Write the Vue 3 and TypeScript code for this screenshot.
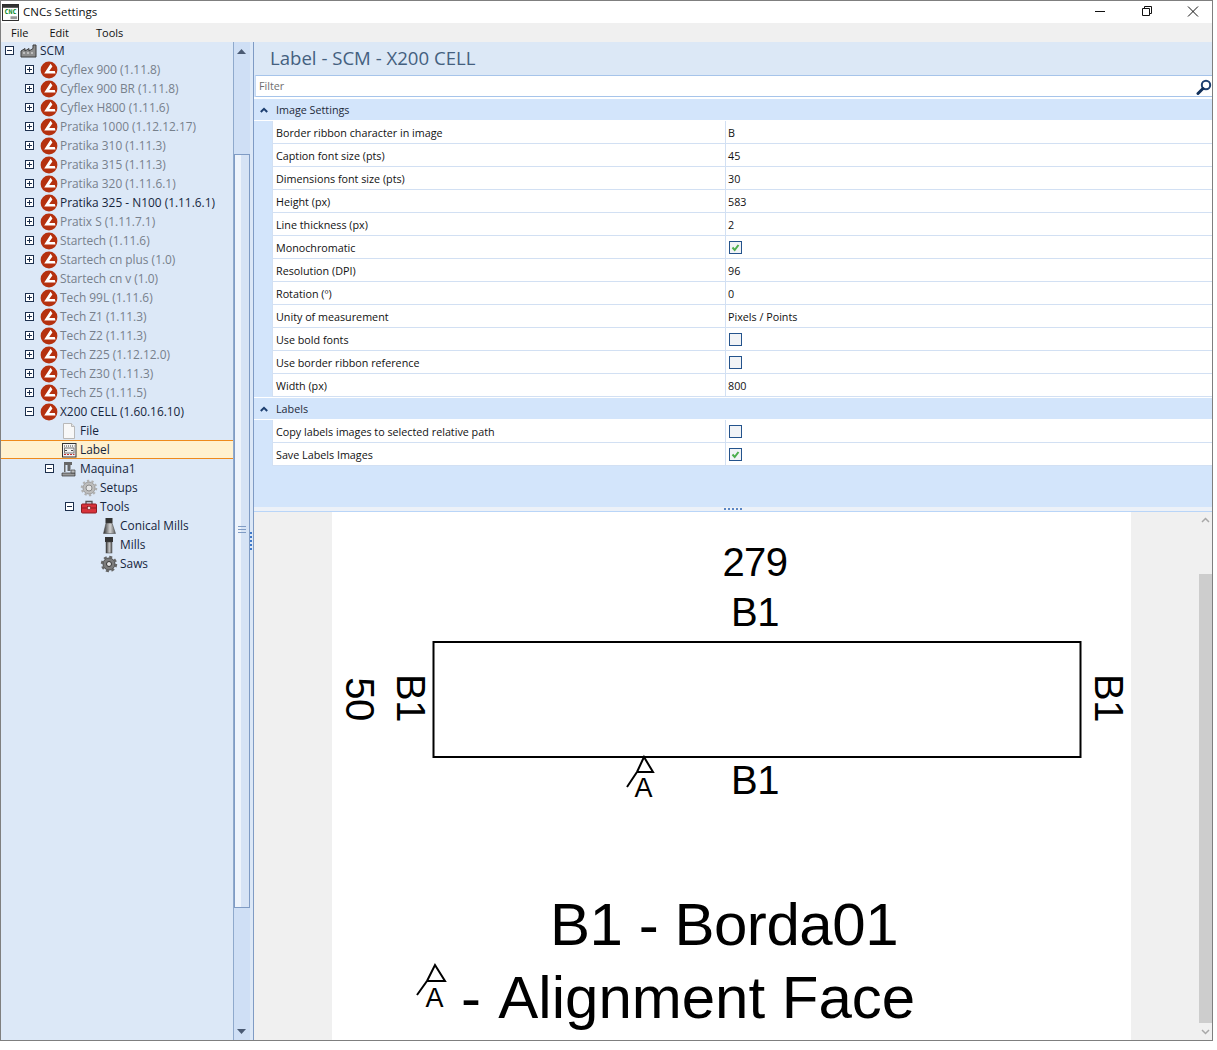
<script setup lang="ts">
interface TreeNode {
  label: string;
  level: number;
  icon: string;
  expander?: "plus" | "minus";
  muted?: boolean;
  selected?: boolean;
}

const model = (label: string, muted = true, expander: "plus" | "minus" | undefined = "plus"): TreeNode => ({
  label,
  level: 1,
  icon: "logo",
  expander,
  muted,
});

const nodes: TreeNode[] = [
  { label: "SCM", level: 0, icon: "factory", expander: "minus" },
  model("Cyflex 900 (1.11.8)"),
  model("Cyflex 900 BR (1.11.8)"),
  model("Cyflex H800 (1.11.6)"),
  model("Pratika 1000 (1.12.12.17)"),
  model("Pratika 310 (1.11.3)"),
  model("Pratika 315 (1.11.3)"),
  model("Pratika 320 (1.11.6.1)"),
  model("Pratika 325 - N100 (1.11.6.1)", false),
  model("Pratix S (1.11.7.1)"),
  model("Startech (1.11.6)"),
  model("Startech cn plus (1.0)"),
  { label: "Startech cn v (1.0)", level: 1, icon: "logo", muted: true },
  model("Tech 99L (1.11.6)"),
  model("Tech Z1 (1.11.3)"),
  model("Tech Z2 (1.11.3)"),
  model("Tech Z25 (1.12.12.0)"),
  model("Tech Z30 (1.11.3)"),
  model("Tech Z5 (1.11.5)"),
  model("X200 CELL (1.60.16.10)", false, "minus"),
  { label: "File", level: 2, icon: "file" },
  { label: "Label", level: 2, icon: "label", selected: true },
  { label: "Maquina1", level: 2, icon: "machine", expander: "minus" },
  { label: "Setups", level: 3, icon: "gear" },
  { label: "Tools", level: 3, icon: "toolbox", expander: "minus" },
  { label: "Conical Mills", level: 4, icon: "conical" },
  { label: "Mills", level: 4, icon: "mill" },
  { label: "Saws", level: 4, icon: "saw" },
];

interface Setting {
  name: string;
  value?: string;
  checked?: boolean;
}

const groups: { title: string; rows: Setting[] }[] = [
  {
    title: "Image Settings",
    rows: [
      { name: "Border ribbon character in image", value: "B" },
      { name: "Caption font size (pts)", value: "45" },
      { name: "Dimensions font size (pts)", value: "30" },
      { name: "Height (px)", value: "583" },
      { name: "Line thickness (px)", value: "2" },
      { name: "Monochromatic", checked: true },
      { name: "Resolution (DPI)", value: "96" },
      { name: "Rotation (º)", value: "0" },
      { name: "Unity of measurement", value: "Pixels / Points" },
      { name: "Use bold fonts", checked: false },
      { name: "Use border ribbon reference", checked: false },
      { name: "Width (px)", value: "800" },
    ],
  },
  {
    title: "Labels",
    rows: [
      { name: "Copy labels images to selected relative path", checked: false },
      { name: "Save Labels Images", checked: true },
    ],
  },
];
</script>

<template>
  <div class="window">
    <header class="titlebar">
      <svg class="app-icon" width="17" height="17" viewBox="0 0 18 18">
        <rect x="0.5" y="0.5" width="17" height="17" fill="#fff" stroke="#222" />
        <rect x="1" y="1" width="16" height="3" fill="#333" />
        <text x="9" y="11" class="app-icon-text">CNC</text>
        <rect x="9" y="13" width="7" height="3" fill="#999" />
      </svg>
      <span class="title">CNCs Settings</span>
      <div class="window-buttons">
        <svg width="46" height="22" viewBox="-4 0 46 22"><path d="M17 10.500h10" stroke="#111" fill="none" /></svg>
        <svg width="46" height="22" viewBox="-4 0 46 22">
          <path d="M18.500 7.500h7v7h-7zM20.500 7.500v-2h7v7h-2" stroke="#111" fill="none" />
        </svg>
        <svg width="46" height="22" viewBox="-4 0 46 22"><path d="M18 5.500l10 10M28 5.500l-10 10" stroke="#111" fill="none" /></svg>
      </div>
    </header>

    <nav class="menubar">
      <span class="menu-file">File</span>
      <span class="menu-edit">Edit</span>
      <span class="menu-tools">Tools</span>
    </nav>

    <div class="workspace">
      <aside class="tree-pane">
        <ul class="tree">
          <li
            v-for="node in nodes"
            :key="node.label"
            class="tree-row"
            :class="[`level-${node.level}`, { selected: node.selected, muted: node.muted }]"
          >
            <span class="expander-slot">
              <svg v-if="node.expander" width="9" height="9" viewBox="0 0 9 9">
                <rect x="0.5" y="0.5" width="8" height="8" fill="#fff" stroke="#1c2f4d" />
                <path d="M2 4.500h5" stroke="#1c2f4d" />
                <path v-if="node.expander === 'plus'" d="M4.500 2v5" stroke="#1c2f4d" />
              </svg>
            </span>
            <svg class="node-icon" width="18" height="18" viewBox="0 0 18 18">
              <template v-if="node.icon === 'logo'">
                <circle cx="9" cy="9" r="8.400" fill="#b5310f" />
                <path d="M10.600 2.800 4.200 12.600h11.300l-.7-2.600H9.200l3.200-4.600z" fill="#fff" />
              </template>
              <template v-else-if="node.icon === 'factory'">
                <path d="M1 15V9l4-2.500V9l4-2.500V9l4-2.500V3h3v12z" fill="#8c8c8c" stroke="#3c3c3c" />
                <path d="M3 11h2M7 11h2M11 11h2" stroke="#eee" />
              </template>
              <template v-else-if="node.icon === 'file'">
                <path d="M3.500 1.500h8l3 3v12h-11z" fill="#f8f8f8" stroke="#b9b9b9" />
                <path d="M11.500 1.500v3h3" fill="#e5e5e5" stroke="#b9b9b9" />
              </template>
              <template v-else-if="node.icon === 'label'">
                <rect x="2.500" y="2.500" width="13.500" height="13.500" fill="#f3f3f3" stroke="#333" />
                <path d="M4 5h10.500" stroke="#444" stroke-dasharray="1 1" />
                <path d="M5 9.500h2M11 9.500h2" stroke="#444" />
                <path d="M4 13.500h10.500" stroke="#c03030" stroke-dasharray="2 1" />
                <rect x="4.500" y="7" width="9.500" height="5" fill="none" stroke="#777" />
              </template>
              <template v-else-if="node.icon === 'machine'">
                <path d="M4 2h8v3h-1.500v6h-3V5H5.500v7H4z" fill="#666" />
                <path d="M2 13h13v3H2z" fill="#999" stroke="#333" stroke-width="0.7" />
                <path d="M11 10h4v3h-4z" fill="#bbb" stroke="#444" stroke-width="0.7" />
              </template>
              <template v-else-if="node.icon === 'gear'">
                <circle cx="9" cy="9" r="6" fill="#bdbdbd" stroke="#9a9a9a" />
                <circle cx="9" cy="9" r="7" fill="none" stroke="#b0b0b0" stroke-width="2.500" stroke-dasharray="2.200 2.200" />
                <circle cx="9" cy="9" r="3" fill="#e6e6e6" stroke="#8a8a8a" />
              </template>
              <template v-else-if="node.icon === 'toolbox'">
                <path d="M6 6V3.500h6V6" fill="none" stroke="#555" stroke-width="1.300" />
                <rect x="1.500" y="6" width="15" height="9" rx="1" fill="#d8323a" stroke="#8e1a20" />
                <path d="M2 10h14" stroke="#8e1a20" />
                <rect x="7.500" y="8.500" width="3" height="3" fill="#f0d8d8" stroke="#7a1a1a" stroke-width="0.6" />
              </template>
              <template v-else-if="node.icon === 'conical'">
                <defs>
                  <linearGradient id="metal" x1="0" x2="1" y1="0" y2="0">
                    <stop offset="0" stop-color="#2e2e2e" />
                    <stop offset="0.55" stop-color="#d2d2d2" />
                    <stop offset="1" stop-color="#5b5b5b" />
                  </linearGradient>
                </defs>
                <rect x="5.500" y="1" width="7" height="5" fill="#333" />
                <path d="M6 6h6l3.500 10.500h-12z" fill="url(#metal)" stroke="#3c3c3c" stroke-width="0.5" />
              </template>
              <template v-else-if="node.icon === 'mill'">
                <defs>
                  <linearGradient id="metal-2" x1="0" x2="1" y1="0" y2="0">
                    <stop offset="0" stop-color="#333" />
                    <stop offset="0.55" stop-color="#c9c9c9" />
                    <stop offset="1" stop-color="#555" />
                  </linearGradient>
                </defs>
                <rect x="5" y="1" width="8" height="5" fill="#333" />
                <rect x="6" y="6" width="6" height="11" fill="url(#metal-2)" stroke="#444" stroke-width="0.5" />
              </template>
              <template v-else-if="node.icon === 'saw'">
                <circle cx="9" cy="9" r="6" fill="#7c7c7c" stroke="#4c4c4c" />
                <circle cx="9" cy="9" r="7" fill="none" stroke="#666" stroke-width="2.400" stroke-dasharray="3 2.500" />
                <circle cx="9" cy="9" r="2.500" fill="#e2e2e2" stroke="#333" />
              </template>
            </svg>
            <span class="node-label">{{ node.label }}</span>
          </li>
        </ul>
      </aside>

      <div class="tree-scrollbar">
        <svg class="scroll-up" width="9" height="5" viewBox="0 0 9 5"><path d="M4.500 0 9 5H0z" fill="#4a5a73" /></svg>
        <div class="tree-thumb"><span class="grip" /></div>
        <svg class="scroll-down" width="9" height="5" viewBox="0 0 9 5"><path d="M0 0h9L4.500 5z" fill="#4a5a73" /></svg>
      </div>

      <div class="pane-splitter"><span class="splitter-dots" /></div>

      <main class="content">
        <section class="settings">
          <h1 class="page-title">Label - SCM - X200 CELL</h1>
          <div class="filter">
            <span class="filter-hint">Filter</span>
            <svg class="filter-icon" width="16" height="16" viewBox="0 0 16 16">
              <circle cx="10" cy="6" r="4.200" fill="none" stroke="#1d3f70" stroke-width="2" />
              <path d="M7 9.500 2 14.500" stroke="#12305a" stroke-width="3" stroke-linecap="round" />
            </svg>
          </div>

          <div class="grid">
            <div v-for="group in groups" :key="group.title" class="group">
              <div class="group-head">
                <svg width="8" height="6" viewBox="0 0 8 6"><path d="M0.800 5 4 1.800 7.200 5" fill="none" stroke="#1d3f70" stroke-width="2" /></svg>
                <span>{{ group.title }}</span>
              </div>
              <div v-for="row in group.rows" :key="row.name" class="row">
                <span class="row-name">{{ row.name }}</span>
                <span class="row-value">
                  <template v-if="row.value">{{ row.value }}</template>
                  <span v-else class="checkbox">
                    <svg v-if="row.checked" width="11" height="11" viewBox="0 0 11 11">
                      <path d="M2.500 5.500 4.700 8 8.500 3" fill="none" stroke="#4cae4c" stroke-width="2" />
                    </svg>
                  </span>
                </span>
              </div>
            </div>
          </div>
          <div class="grid-filler" />
        </section>

        <div class="h-splitter"><span class="h-dots" /></div>

        <section class="preview">
          <svg class="label-image" width="799" height="528" viewBox="332 512 799 528">
            <rect x="332" y="512" width="799" height="528" fill="#fff" />
            <rect x="433.500" y="642" width="647" height="115" fill="none" stroke="#000" stroke-width="2" />
            <text x="755" y="576" class="dim">279</text>
            <text x="755" y="626" class="dim">B1</text>
            <text x="755" y="794" class="dim">B1</text>
            <text transform="translate(346 699) rotate(90)" class="dim">50</text>
            <text transform="translate(397 698) rotate(90)" class="dim">B1</text>
            <text transform="translate(1095 698) rotate(90)" class="dim">B1</text>

            <path d="M627 787 637 772H653L644 757 637 772" fill="none" stroke="#000" stroke-width="2" />
            <text x="643.500" y="797" class="align-a">A</text>

            <path d="M417 995 427 981H445L435 965 427 981" fill="none" stroke="#000" stroke-width="2" />
            <text x="434.500" y="1007" class="align-a">A</text>

            <text x="724" y="945" class="caption">B1 - Borda01</text>
            <text x="461" y="1018" class="caption left">- <tspan dx="4">Alignment Face</tspan></text>
          </svg>
          <div class="preview-scrollbar">
            <svg class="chevron-up" width="9" height="6" viewBox="0 0 9 6"><path d="M1 5l3.500-3.500L8 5" fill="none" stroke="#a8a8a8" stroke-width="1.500" /></svg>
            <div class="preview-thumb" />
            <svg class="chevron-down" width="9" height="6" viewBox="0 0 9 6"><path d="M1 1l3.500 3.500L8 1" fill="none" stroke="#a8a8a8" stroke-width="1.500" /></svg>
          </div>
        </section>
      </main>
    </div>
  </div>
</template>

<style>
html,
body {
  margin: 0;
  background: #fff;
}
</style>

<style scoped>
.window {
  box-sizing: border-box;
  width: 1213px;
  height: 1041px;
  display: flex;
  flex-direction: column;
  border: 1px solid #7f7f7f;
  background: #fff;
  font-family: "Open Sans", "Noto Sans", sans-serif;
  font-size: 10.750px;
  color: #1a1a1a;
  overflow: hidden;
}

.titlebar {
  height: 22px;
  display: flex;
  align-items: center;
  flex: none;
  background: #fff;
}

.app-icon {
  margin-left: 1px;
}

.app-icon-text {
  font-family: "DejaVu Sans Mono", monospace;
  font-size: 7px;
  font-weight: 700;
  fill: #0a8a2a;
  text-anchor: middle;
}

.title {
  margin-left: 4px;
  padding-bottom: 2px;
  font-size: 11.500px;
  color: #111;
}

.window-buttons {
  margin-left: auto;
  display: flex;
}

.menubar {
  height: 19px;
  flex: none;
  display: flex;
  align-items: center;
  background: #f0f0f0;
  font-size: 11px;
  color: #111;
}

.menu-file {
  margin-left: 10px;
}

.menu-edit {
  margin-left: 21px;
}

.menu-tools {
  margin-left: 27px;
}

.workspace {
  flex: 1;
  min-height: 0;
  display: flex;
}

.tree-pane {
  width: 232px;
  flex: none;
  background: #dce8f7;
  overflow: hidden;
  border-right: 1px solid #8fa9cc;
}

.tree {
  list-style: none;
  margin: -1px 0 0;
  padding: 0;
}

.tree-row {
  height: 19px;
  display: flex;
  align-items: center;
  box-sizing: border-box;
  white-space: nowrap;
  font-size: 11.900px;
  color: #16263d;
}

.node-label {
  padding-bottom: 2px;
}

.tree-row.muted .node-label {
  color: #77808c;
}

.tree-row.selected {
  background: #fff1cf;
  border-top: 1px solid #ee8a1c;
  border-bottom: 1px solid #ee8a1c;
}

.level-0 {
  padding-left: 4px;
}

.level-1 {
  padding-left: 24px;
}

.level-2 {
  padding-left: 44px;
}

.level-3 {
  padding-left: 64px;
}

.level-4 {
  padding-left: 84px;
}

.expander-slot {
  width: 15px;
  height: 9px;
  flex: none;
  display: flex;
}

.expander-slot svg {
  display: block;
}

.node-icon {
  flex: none;
  margin-right: 2px;
}

.tree-scrollbar {
  width: 16px;
  flex: none;
  position: relative;
  background: #cfdff5;
}

.scroll-up {
  position: absolute;
  top: 7px;
  left: 3px;
}

.scroll-down {
  position: absolute;
  bottom: 6px;
  left: 3px;
}

.tree-thumb {
  position: absolute;
  top: 112px;
  left: 0;
  right: 0;
  height: 754px;
  box-sizing: border-box;
  border: 1px solid #7f9bc4;
  background: linear-gradient(90deg, #eef4fc 0 45%, #d6e3f5 45% 100%);
  display: flex;
  align-items: center;
  justify-content: center;
}

.grip {
  width: 8px;
  height: 5px;
  margin-bottom: 3px;
  border-top: 1px solid #7f9bc4;
  border-bottom: 1px solid #7f9bc4;
  background: linear-gradient(#7f9bc4, #7f9bc4) center / 100% 1px no-repeat;
}

.pane-splitter {
  width: 4px;
  flex: none;
  background: #dce8f7;
  border-right: 1px solid #7f9bc4;
  box-sizing: border-box;
  display: flex;
  align-items: center;
}

.splitter-dots {
  width: 2px;
  height: 18px;
  background: repeating-linear-gradient(#3f78c8 0 2px, transparent 2px 4px);
}

.content {
  flex: 1;
  min-width: 0;
  display: flex;
  flex-direction: column;
  background: #f0f0f0;
}

.settings {
  height: 465px;
  flex: none;
  display: flex;
  flex-direction: column;
  background: #d3e5fb;
}

.page-title {
  margin: 0;
  height: 33px;
  flex: none;
  box-sizing: border-box;
  padding: 4px 0 0 16px;
  background: #dce8f6;
  font-size: 18.600px;
  font-weight: 400;
  line-height: 24px;
  color: #44607f;
}

.filter {
  height: 22px;
  flex: none;
  box-sizing: border-box;
  margin-left: 1px;
  display: flex;
  align-items: center;
  justify-content: space-between;
  background: #fff;
  border-top: 1px solid #a6c4ea;
  border-bottom: 1px solid #a6c4ea;
  border-left: 1px solid #c8daf2;
  padding-left: 3px;
}

.filter-hint {
  color: #6f6f6f;
}

.filter-icon {
  margin-top: 1px;
}

.grid {
  border-top: 1px solid #fff;
  flex: none;
}

.group {
  display: flex;
  flex-direction: column;
}

.group-head {
  height: 23px;
  display: flex;
  align-items: center;
  gap: 8px;
  padding-left: 6px;
  box-sizing: border-box;
  background: #d3e5fb;
  border-top: 1px solid #fff;
  border-bottom: 1px solid #fff;
  color: #1e2a3a;
}

.row {
  height: 23px;
  box-sizing: border-box;
  margin-left: 18px;
  display: grid;
  grid-template-columns: 452px 1fr;
  background: #fff;
  border-bottom: 1px solid #d2e0f3;
  border-left: 1px solid #d2e0f3;
}

.row-name,
.row-value {
  display: flex;
  align-items: center;
  padding-top: 2px;
  padding-left: 3px;
  box-sizing: border-box;
  color: #111;
}

.row-value {
  border-left: 1px solid #d2e0f3;
  padding-left: 2px;
}

.checkbox {
  box-sizing: border-box;
  width: 13px;
  height: 13px;
  margin-top: -2px;
  margin-left: 1px;
  border: 1px solid #24538c;
  background: #f1f3f6;
  display: block;
}

.checkbox svg {
  display: block;
}

.grid-filler {
  flex: 1;
}

.h-splitter {
  height: 5px;
  flex: none;
  box-sizing: border-box;
  background: #ecf1f8;
  border-bottom: 1px solid #b9d5f8;
  display: flex;
  justify-content: center;
}

.h-dots {
  width: 18px;
  height: 2px;
  margin-top: 1px;
  background: repeating-linear-gradient(90deg, #5a86c4 0 2px, transparent 2px 4px);
}

.preview {
  flex: 1;
  min-height: 0;
  position: relative;
  background: #f0f0f0;
  overflow: hidden;
}

.label-image {
  position: absolute;
  left: 78px;
  top: 0;
  display: block;
}

.dim {
  font-family: "Liberation Sans", Arial, sans-serif;
  font-size: 40px;
  letter-spacing: -0.5px;
  fill: #000;
  text-anchor: middle;
}

.align-a {
  font-family: "Liberation Sans", Arial, sans-serif;
  font-size: 27px;
  text-anchor: middle;
}

.caption {
  font-family: "Liberation Sans", Arial, sans-serif;
  font-size: 60px;
  letter-spacing: -0.45px;
  fill: #000;
  text-anchor: middle;
}

.caption.left {
  letter-spacing: 0;
  text-anchor: start;
}

.preview-scrollbar {
  position: absolute;
  top: 0;
  right: 0;
  bottom: 0;
  width: 13px;
  background: #f0f0f0;
}

.preview-thumb {
  position: absolute;
  top: 62px;
  left: 0;
  right: 0;
  height: 449px;
  background: #cdcdcd;
}

.chevron-up {
  position: absolute;
  top: 5px;
  left: 2px;
}

.chevron-down {
  position: absolute;
  bottom: 5px;
  left: 2px;
}
</style>
